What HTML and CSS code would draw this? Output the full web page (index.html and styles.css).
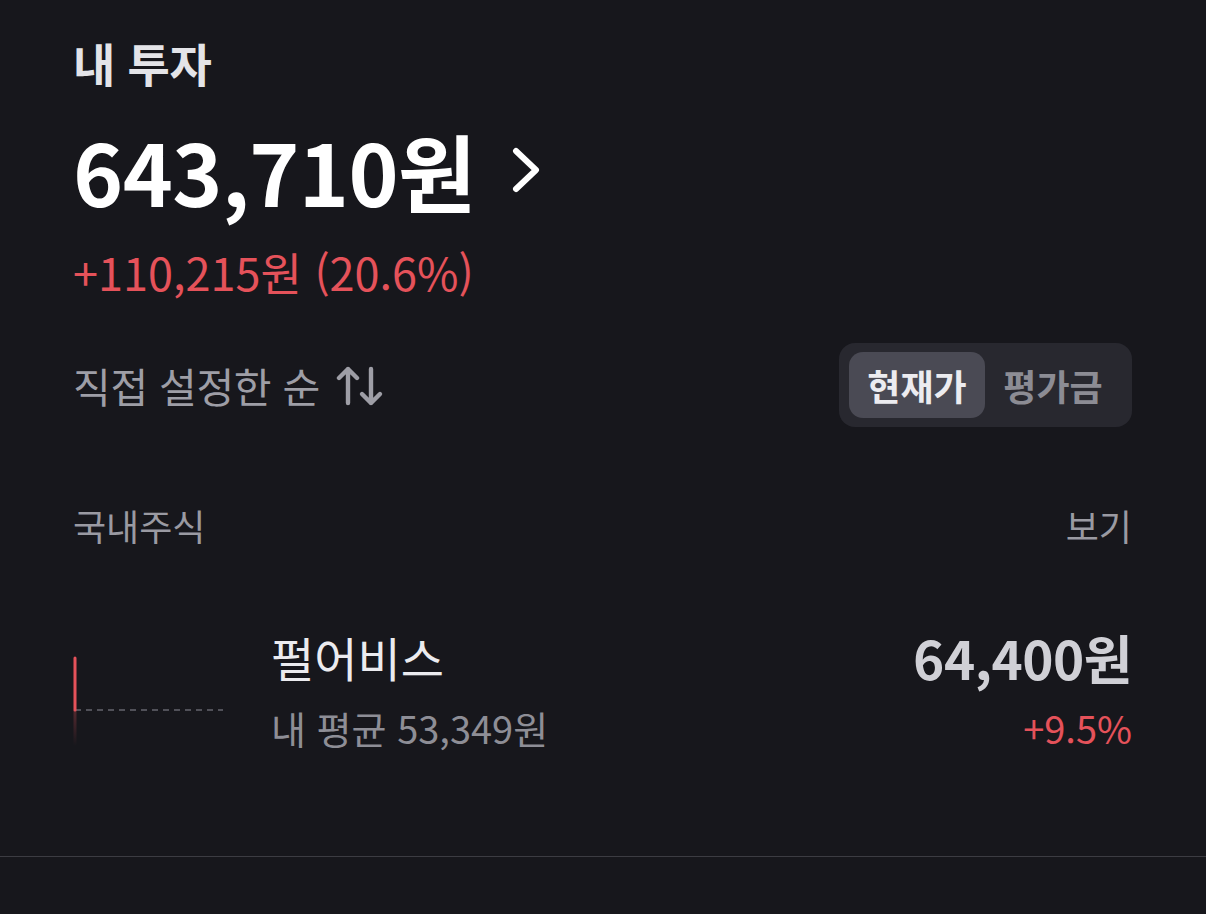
FILE: index.html
```html
<!DOCTYPE html>
<html lang="ko">
<head>
<meta charset="utf-8">
<link rel="stylesheet" href="styles.css">
</head>
<body>
<div class="page">
  <h1 class="title">내 투자</h1>
  <div class="total">
    <span class="total-amount">643,710원</span>
    <svg class="chev" width="30" height="46" viewBox="0 0 30 46"><path d="M4 4 L24 23 L4 42" fill="none" stroke="#ffffff" stroke-width="6" stroke-linecap="round" stroke-linejoin="round"/></svg>
  </div>
  <div class="profit">+110,215원 (20.6%)</div>

  <div class="controls">
    <div class="sort">직접 설정한 순
      <svg class="sort-icon" width="48" height="42" viewBox="0 0 48 42"><g fill="none" stroke="#9e9ea6" stroke-width="4.4" stroke-linecap="round" stroke-linejoin="round"><path d="M12 38 V4 M3 13 L12 4 L21 13"/><path d="M35 4 V38 M26 29 L35 38 L44 29"/></g></svg>
    </div>
    <div class="segment">
      <span class="seg seg-on">현재가</span>
      <span class="seg">평가금</span>
    </div>
  </div>

  <div class="section-head">
    <span class="section-title">국내주식</span>
    <span class="section-link">보기</span>
  </div>

  <div class="stock">
    <div class="chart">
      <svg width="152" height="130" viewBox="0 0 152 130">
        <defs>
          <linearGradient id="fade" x1="0" y1="0" x2="0" y2="1">
            <stop offset="0" stop-color="#e5525a" stop-opacity="0.3"/>
            <stop offset="1" stop-color="#e5525a" stop-opacity="0"/>
          </linearGradient>
        </defs>
        <line x1="2" y1="81" x2="150" y2="81" stroke="#66666e" stroke-width="1.5" stroke-dasharray="6 5"/>
        <rect x="0.5" y="81" width="3" height="36" fill="url(#fade)"/>
        <line x1="2" y1="29" x2="2" y2="81" stroke="#e5525a" stroke-width="3" stroke-linecap="round"/>
      </svg>
    </div>
    <div class="stock-info">
      <div class="stock-name">펄어비스</div>
      <div class="stock-avg">내 평균 53,349원</div>
    </div>
    <div class="stock-price">
      <div class="price">64,400원</div>
      <div class="rate">+9.5%</div>
    </div>
  </div>
</div>
<div class="divider"></div>
</body>
</html>
```

FILE: styles.css
```css
html, body {
  margin: 0;
  padding: 0;
  background: #17171c;
}
body {
  font-family: "Noto Sans CJK KR", "Noto Sans", sans-serif;
  width: 1206px;
  height: 914px;
  overflow: hidden;
}
.page {
  padding: 30px 74px 0 73px;
  height: 856px;
  box-sizing: border-box;
}
.title {
  margin: 0;
  font-size: 46px;
  font-weight: 700;
  color: #e4e4e8;
  line-height: 64px;
  letter-spacing: -0.3px;
}
.total {
  display: flex;
  align-items: center;
  gap: 36px;
  height: 100px;
  margin-top: 26px;
}
.total-amount {
  font-size: 85px;
  font-weight: 700;
  color: #ffffff;
  letter-spacing: -0.5px;
  line-height: 100px;
}
.profit {
  font-size: 45px;
  color: #e5525a;
  line-height: 56px;
  margin-top: 24px;
  letter-spacing: 0;
}
.controls {
  display: flex;
  justify-content: space-between;
  align-items: center;
  margin-top: 43px;
}
.sort {
  display: flex;
  align-items: center;
  gap: 16px;
  font-size: 41px;
  color: #9e9ea6;
  letter-spacing: -0.3px;
}
.sort-icon {
  margin-top: 2px;
}
.segment {
  display: flex;
  align-items: center;
  background: #28282f;
  border-radius: 16px;
  padding: 9px 10px;
  height: 84px;
  width: 293px;
  box-sizing: border-box;
}
.seg {
  display: flex;
  align-items: center;
  justify-content: center;
  height: 66px;
  width: 136px;
  border-radius: 14px;
  font-size: 36px;
  font-weight: 700;
  color: #8c8c94;
}
.seg-on {
  background: #4a4a54;
  color: #ececf0;
}
.section-head {
  display: flex;
  justify-content: space-between;
  align-items: center;
  margin-top: 73px;
  font-size: 36px;
  color: #9a9aa2;
  line-height: 50px;
}
.stock {
  display: flex;
  align-items: flex-start;
  margin-top: 79px;
}
.chart {
  width: 198px;
  height: 130px;
  flex-shrink: 0;
}
.stock-info {
  flex: 1;
}
.stock-name {
  font-size: 47px;
  color: #ebebef;
  line-height: 56px;
}
.stock-avg {
  font-size: 38px;
  color: #8e8e96;
  line-height: 46px;
  margin-top: 20px;
}
.stock-price {
  text-align: right;
}
.price {
  font-size: 53px;
  font-weight: 700;
  color: #d0d0d6;
  line-height: 56px;
  letter-spacing: -0.5px;
}
.rate {
  font-size: 38px;
  color: #e5525a;
  line-height: 46px;
  margin-top: 20px;
}
.divider {
  height: 1px;
  background: #3c3c42;
}
```
